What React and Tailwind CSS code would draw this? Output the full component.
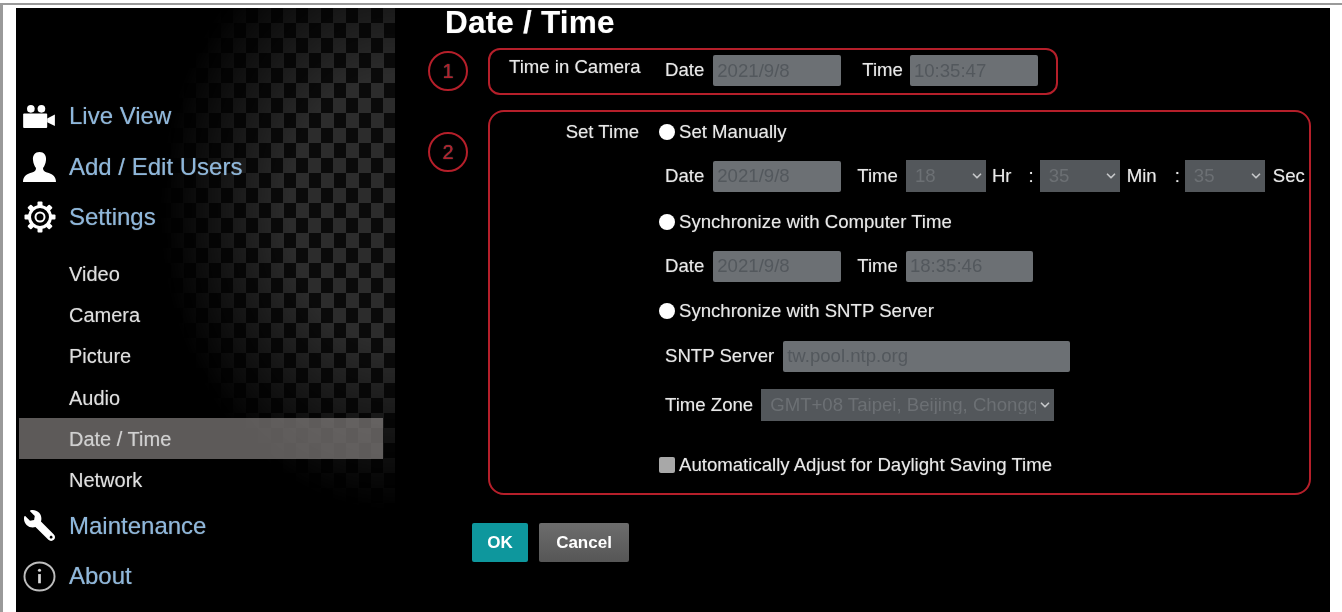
import React from 'react';
import { ChevronDown } from 'lucide-react';
import { FaWrench } from 'react-icons/fa';

const CameraIcon = () => (
  <svg viewBox="0 0 34 26" className="w-[33px] h-[25px]" fill="#fff">
    <circle cx="8" cy="5" r="4" />
    <circle cx="19" cy="5" r="4" />
    <rect x="0" y="10" width="25" height="15" rx="1" />
    <path d="M25 15 L33 11 V23 L25 19 Z" />
  </svg>
);

const UserIcon = () => (
  <svg viewBox="0 0 33 30" className="w-[33px] h-[30px]" fill="#fff">
    <path d="M16.5 0 C21 0 23.5 3.5 23 8 C22.7 11.5 21.5 14 20 16 C20 18.5 21 19.5 24 20.5 C29 22 33 24 33 30 H0 C0 24 4 22 9 20.5 C12 19.5 13 18.5 13 16 C11.5 14 10.3 11.5 10 8 C9.5 3.5 12 0 16.5 0 Z" />
  </svg>
);

const GearIcon = () => (
  <svg viewBox="0 0 32 32" className="w-[32px] h-[32px]" fill="none">
    <g fill="#fff">
      {[0, 45, 90, 135, 180, 225, 270, 315].map((a) => (
        <rect key={a} x="13.5" y="0.5" width="5" height="6" rx="1" transform={`rotate(${a} 16 16)`} />
      ))}
    </g>
    <circle cx="16" cy="16" r="10.5" stroke="#fff" strokeWidth="3" />
    <circle cx="16" cy="16" r="4.5" stroke="#fff" strokeWidth="2" />
  </svg>
);

const InfoIcon = () => (
  <svg viewBox="0 0 34 32" className="w-[33px] h-[31px]" fill="none">
    <ellipse cx="17" cy="16" rx="15.5" ry="14.5" stroke="#bdbdbd" strokeWidth="2" />
    <circle cx="17" cy="9.5" r="1.6" fill="#d8d8d8" />
    <rect x="15.6" y="13.5" width="2.8" height="9.5" fill="#d8d8d8" />
  </svg>
);

const MainItem = ({ icon, label }) => (
  <div className="flex items-center h-[50.5px] pl-[7px]">
    <div className="w-[33px] flex justify-center shrink-0">{icon}</div>
    <span className="ml-[13px] text-[24px] text-[#8db7dc]">{label}</span>
  </div>
);

const subItems = ['Video', 'Camera', 'Picture', 'Audio', 'Date / Time', 'Network'];

const fieldClass =
  'h-[31px] rounded-[2px] bg-[#6c7074] text-[#53585d] text-[18.6px] pl-[4px] outline-none border-0 font-["Liberation_Sans",sans-serif]';

const Field = ({ value, className }) => (
  <input disabled defaultValue={value} className={`${fieldClass} ${className}`} />
);

const Select = ({ value, className }) => (
  <div className={`relative h-[32px] ${className}`}>
    <select
      disabled
      defaultValue={value}
      className='w-full h-full appearance-none bg-[#53575b] text-[#6c7074] text-[18.6px] pl-[9px] pr-[18px] outline-none border-0 font-["Liberation_Sans",sans-serif]'
    >
      <option>{value}</option>
    </select>
    <ChevronDown className="absolute right-[2px] top-[9px] w-[14px] h-[14px] text-[#c4c6c8]" strokeWidth={3} />
  </div>
);

const Radio = () => <span className="w-[16px] h-[16px] rounded-full bg-white shrink-0" />;

const Numbered = ({ n, className }) => (
  <div className={`w-[40px] h-[40px] shrink-0 rounded-full border-[2.5px] border-[#b51f2a] flex items-center justify-center text-[#b51f2a] text-[20px] ${className || ''}`}>
    {n}
  </div>
);

export default function App() {
  return (
    <div className='w-full h-[612px] overflow-hidden bg-white pt-[3px] font-["Liberation_Sans",Arial,sans-serif]'>
      <div className="border-t-2 border-l-[3px] border-[#9a9a9a] h-[609px] pt-[3px] pl-[13px] pr-[12px]">
        <div className="flex h-full bg-black text-[#e8e8e8] blur-[0.5px] [text-shadow:0_0_1px_rgba(255,255,255,0.45)]">
          <aside className="relative w-[379px] shrink-0 pt-[83px]">
            <div className="absolute left-[130px] right-0 top-0 h-[505px] bg-[conic-gradient(#2c2c2c_25%,#0a0a0a_0_50%,#2c2c2c_0_75%,#0a0a0a_0)] bg-[length:25px_30px] [mask-image:radial-gradient(ellipse_235px_300px_at_100%_40%,black_45%,transparent)]" />
            <div className="relative">
              <MainItem icon={<CameraIcon />} label="Live View" />
              <MainItem icon={<UserIcon />} label="Add / Edit Users" />
              <MainItem icon={<GearIcon />} label="Settings" />
              <div className="mt-[11px] ml-[3px] mr-[12px]">
                {subItems.map((item) => (
                  <div
                    key={item}
                    className={`h-[41.2px] pl-[50px] flex items-center text-[20px] ${
                      item === 'Date / Time' ? 'bg-[#8f8a88]/65 text-[#d0d0d0]' : 'text-[#dedede]'
                    }`}
                  >
                    {item}
                  </div>
                ))}
              </div>
              <MainItem icon={<FaWrench className="w-[31px] h-[31px] text-white -scale-x-100" />} label="Maintenance" />
              <MainItem icon={<InfoIcon />} label="About" />
            </div>
          </aside>

          <main className="flex-1 min-w-0 text-[18.6px] leading-none">
            <h1 className="pl-[50px] h-[40px] text-[31.5px] leading-[28px] tracking-[0.2px] font-bold text-white">Date / Time</h1>

            <div className="flex items-start pl-[33px]">
              <Numbered n="1" className="mt-[3px]" />
              <div className="ml-[20px] w-[570px] h-[47px] rounded-[12px] border-[2.5px] border-[#b51f2a] flex items-center pb-[2px]">
                <span className="ml-[19px] w-[132px] -mt-[6px] whitespace-nowrap">Time in Camera</span>
                <span className="ml-[24px]">Date</span>
                <Field value="2021/9/8" className="ml-[9px] w-[128px]" />
                <span className="ml-[21px]">Time</span>
                <Field value="10:35:47" className="ml-[7px] w-[128px]" />
              </div>
            </div>

            <div className="flex items-start pl-[33px] mt-[15px]">
              <Numbered n="2" className="mt-[22px]" />
              <div className="ml-[20px] w-[823px] h-[385px] rounded-[16px] border-[2.5px] border-[#b51f2a] pt-[5px]">
                <div className="flex items-center h-[30px]">
                  <span className="w-[149px] text-right">Set Time</span>
                  <span className="ml-[20px] flex items-center">
                    <Radio />
                    <span className="ml-[4px]">Set Manually</span>
                  </span>
                </div>

                <div className="flex items-center h-[30px] mt-[14px] pl-[175px]">
                  <span>Date</span>
                  <Field value="2021/9/8" className="ml-[9px] w-[128px]" />
                  <span className="ml-[16px]">Time</span>
                  <Select value="18" className="ml-[8px] w-[80px]" />
                  <span className="ml-[6px]">Hr</span>
                  <span className="ml-[17px]">:</span>
                  <Select value="35" className="ml-[6px] w-[80px]" />
                  <span className="ml-[7px]">Min</span>
                  <span className="ml-[18px]">:</span>
                  <Select value="35" className="ml-[5px] w-[80px]" />
                  <span className="ml-[8px]">Sec</span>
                </div>

                <div className="flex items-center h-[30px] mt-[16px] pl-[169px]">
                  <Radio />
                  <span className="ml-[4px]">Synchronize with Computer Time</span>
                </div>

                <div className="flex items-center h-[30px] mt-[14px] pl-[175px]">
                  <span>Date</span>
                  <Field value="2021/9/8" className="ml-[9px] w-[128px]" />
                  <span className="ml-[16px]">Time</span>
                  <Field value="18:35:46" className="ml-[8px] w-[127px]" />
                </div>

                <div className="flex items-center h-[30px] mt-[15px] pl-[169px]">
                  <Radio />
                  <span className="ml-[4px]">Synchronize with SNTP Server</span>
                </div>

                <div className="flex items-center h-[30px] mt-[15px] pl-[175px]">
                  <span>SNTP Server</span>
                  <Field value="tw.pool.ntp.org" className="ml-[9px] w-[287px]" />
                </div>

                <div className="flex items-center h-[30px] mt-[19px] pl-[175px]">
                  <span>Time Zone</span>
                  <Select value="GMT+08 Taipei, Beijing, Chongqing" className="ml-[8px] w-[293px]" />
                </div>

                <div className="flex items-center h-[30px] mt-[30px] pl-[169px]">
                  <span className="w-[16px] h-[16px] rounded-[2px] bg-[#a8a8a8] shrink-0" />
                  <span className="ml-[4px]">Automatically Adjust for Daylight Saving Time</span>
                </div>
              </div>
            </div>

            <div className="flex pl-[77px] mt-[28px] gap-[11px]">
              <button className="w-[56px] h-[39px] rounded-[2px] bg-[#0e979d] text-white font-bold text-[17px]">OK</button>
              <button className="w-[90px] h-[39px] rounded-[2px] bg-linear-to-b from-[#6d6d6d] to-[#565656] text-white font-bold text-[17px]">Cancel</button>
            </div>
          </main>
        </div>
      </div>
    </div>
  );
}
